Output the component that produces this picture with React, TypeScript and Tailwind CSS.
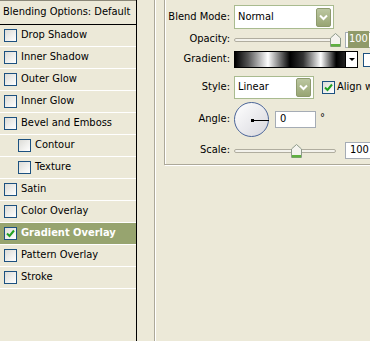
import { ReactNode } from 'react';

const FONT = { fontFamily: '"DejaVu Sans Condensed", "DejaVu Sans", Tahoma, sans-serif' };

interface Effect {
    name: string;
    sub?: boolean;
    checked?: boolean;
}

const effects: Effect[] = [
    { name: 'Drop Shadow' },
    { name: 'Inner Shadow' },
    { name: 'Outer Glow' },
    { name: 'Inner Glow' },
    { name: 'Bevel and Emboss' },
    { name: 'Contour', sub: true },
    { name: 'Texture', sub: true },
    { name: 'Satin' },
    { name: 'Color Overlay' },
    { name: 'Gradient Overlay', checked: true },
    { name: 'Pattern Overlay' },
    { name: 'Stroke' },
];

function Checkbox({ checked }: { checked?: boolean }) {
    return (
        <div className="w-[13px] h-[13px] shrink-0 border border-[#1c5180] bg-gradient-to-br from-[#dcdcd7] to-white flex items-center justify-center">
            {checked && (
                <svg width="9" height="9" viewBox="0 0 9 9">
                    <path d="M1 4.5 L3.5 7 L8 1.5" fill="none" stroke="#21a121" strokeWidth="2" />
                </svg>
            )}
        </div>
    );
}

function DropButton() {
    return (
        <div className="w-[15px] h-[19px] shrink-0 rounded-[2px] border border-[#8e9b6d] bg-gradient-to-b from-[#bcc7a2] to-[#98a573] flex items-center justify-center">
            <svg width="9" height="7" viewBox="0 0 9 7">
                <path d="M1 1.5 L4.5 5 L8 1.5" fill="none" stroke="white" strokeWidth="2" />
            </svg>
        </div>
    );
}

function Select({ value, width }: { value: string; width: string }) {
    return (
        <div className={`${width} h-full shrink-0 border border-[#a9bb8f] bg-white flex items-center justify-between pl-[3px] pr-[2px]`}>
            <span>{value}</span>
            <DropButton />
        </div>
    );
}

function Slider({ pos }: { pos: number }) {
    return (
        <div className="relative w-[102px] h-full shrink-0 flex items-center">
            <div className="w-full h-[4px] rounded-full border border-[#b0ad9f] bg-[#f3f2ec]" />
            {/* thumb */}
            <div className="absolute top-1/2 -translate-y-1/2" style={{ left: pos }}>
                <svg width="11" height="14" viewBox="0 0 11 14">
                    <path d="M0.5 5 L5.5 0.5 L10.5 5 L10.5 13.5 L0.5 13.5 Z" fill="#f4f3ee" stroke="#8d9a8a" />
                    <rect x="1" y="11" width="9" height="2.5" fill="#5fb03f" />
                </svg>
            </div>
        </div>
    );
}

function Row({ label, height, className, children }: { label: string; height: string; className?: string; children: ReactNode }) {
    return (
        <div className={`flex items-center whitespace-nowrap ${height} ${className ?? ''}`}>
            <div className="w-[66px] shrink-0 text-right pr-[1px]">{label}</div>
            <div className="flex items-center shrink-0 h-full ml-[3px]">{children}</div>
        </div>
    );
}

export default function App() {
    return (
        <div className="w-[370px] h-[341px] overflow-hidden bg-[#ece9d8] text-[11px] text-black flex" style={FONT}>
            {/* Effects list */}
            <div className="w-[137px] h-full shrink-0 border-r border-black flex flex-col">
                <div className="h-[25px] border-t border-[#8a8778] border-b border-b-black flex items-center pl-[3px] pb-[1px]">
                    Blending Options: Default
                </div>
                {effects.map(e => (
                    <div
                        key={e.name}
                        className={`h-[22px] border-b border-white flex items-center gap-[4px] ${e.sub ? 'pl-[18px]' : 'pl-[4px]'} ${e.checked ? 'bg-[#97a46f] text-white font-bold' : ''}`}
                    >
                        <Checkbox checked={e.checked} />
                        <span>{e.name}</span>
                    </div>
                ))}
            </div>

            {/* Settings */}
            <div className="w-[233px] shrink-0 h-full pl-[17px]">
                <div className="h-full border-l border-[#aca899] pl-[9px]" style={{ boxShadow: 'inset 1px 0 0 white' }}>
                    <div className="w-[260px] h-[165px] border-l border-b border-[#aca899] flex flex-col pt-[5px]" style={{ boxShadow: '1px 1px 0 white, inset 1px 0 0 white' }}>
                        <Row label="Blend Mode:" height="h-[24px]">
                            <Select value="Normal" width="w-[100px]" />
                        </Row>
                        <Row label="Opacity:" height="h-[15px]" className="mt-[3px]">
                            <Slider pos={96} />
                            <div className="ml-[9px] w-[30px] h-[16px] border border-[#a5acb5] bg-white flex items-center pl-[2px]">
                                <span className="bg-[#8f9a69] text-white px-[1px]">100</span>
                            </div>
                        </Row>
                        <Row label="Gradient:" height="h-[17px]" className="mt-[4px]">
                            <div className="w-[112px] h-full border border-black" style={{ background: 'linear-gradient(to right, #000 0%, #555 12%, #fff 30%, #000 50%, #333 62%, #fff 78%, #000 92%, #222 100%)' }} />
                            <div className="w-[12px] h-full border border-black border-l-0 bg-white flex items-center justify-center">
                                <svg width="6" height="4" viewBox="0 0 6 4"><path d="M0 0 L6 0 L3 3 Z" fill="black" /></svg>
                            </div>
                            <div className="ml-[5px] w-[13px] h-[14px] border border-[#1c5180] bg-white" />
                        </Row>
                        <Row label="Style:" height="h-[23px]" className="mt-[8px]">
                            <Select value="Linear" width="w-[80px]" />
                            <div className="ml-[8px] flex items-center gap-[2px]">
                                <Checkbox checked />
                                <span>Align with Layer</span>
                            </div>
                        </Row>
                        <Row label="Angle:" height="h-[35px]" className="mt-[3px]">
                            <div className="relative w-[35px] h-[35px] rounded-full border border-[#4b6599] bg-gradient-to-br from-white to-[#d8d8de]">
                                <div className="absolute left-[16px] top-[16px] w-[3px] h-[3px] bg-black" />
                                <div className="absolute left-[17px] top-[17px] w-[17px] h-[1px] bg-black" />
                            </div>
                            <div className="ml-[6px] w-[41px] h-[17px] border border-[#a5acb5] bg-white flex items-center pl-[4px]">0</div>
                            <span className="ml-[4px] self-start mt-[8px]">°</span>
                        </Row>
                        <Row label="Scale:" height="h-[17px]" className="mt-[5px]">
                            <Slider pos={57} />
                            <div className="ml-[9px] w-[30px] h-[17px] border border-[#a5acb5] bg-white flex items-center pl-[4px]">100</div>
                        </Row>
                    </div>
                </div>
            </div>
        </div>
    );
}
